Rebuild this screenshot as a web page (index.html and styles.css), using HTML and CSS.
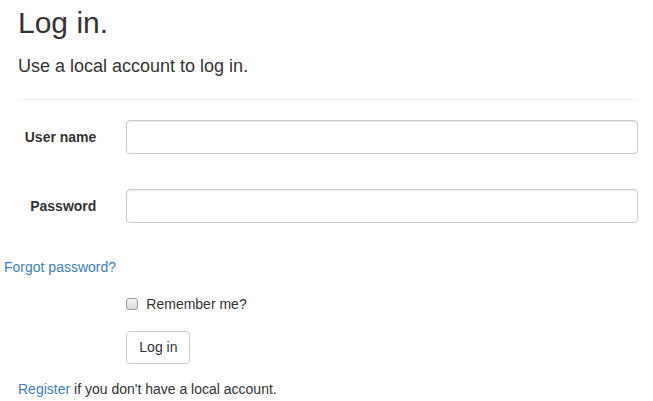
FILE: index.html
```html
<!DOCTYPE html>
<html lang="en">
<head>
<meta charset="utf-8">
<title>Log in</title>
<link rel="stylesheet" href="styles.css">
</head>
<body>
<div class="page">
  <h2 class="title">Log in.</h2>
  <h4 class="subtitle">Use a local account to log in.</h4>
  <hr class="divider">
  <form class="form-horizontal">
    <div class="form-row field-row">
      <label class="label-col" for="username">User name</label>
      <div class="input-col"><input class="form-control" id="username" type="text"></div>
    </div>
    <div class="form-row field-row last">
      <label class="label-col" for="password">Password</label>
      <div class="input-col"><input class="form-control" id="password" type="password"></div>
    </div>
    <p class="forgot"><a href="#">Forgot password?</a></p>
    <div class="form-row check-row">
      <div class="offset-col">
        <label class="checkbox"><input type="checkbox" class="check"><span>Remember me?</span></label>
      </div>
    </div>
    <div class="form-row button-row">
      <div class="offset-col">
        <button type="button" class="btn">Log in</button>
      </div>
    </div>
  </form>
  <p class="register"><a href="#">Register</a> if you don't have a local account.</p>
</div>
</body>
</html>
```
FILE: styles.css
```css
* { box-sizing: border-box; }
html, body { margin: 0; padding: 0; background: #fff; }
body {
  font-family: "Liberation Sans", Arial, Helvetica, sans-serif;
  font-size: 14px;
  line-height: 20px;
  color: #333;
}
a { color: #3f7fbf; text-decoration: none; }

.page { padding: 0 15px 0 18px; }

.title {
  font-size: 30px;
  line-height: 33px;
  font-weight: 500;
  margin: 6px 0 0;
}
.subtitle {
  font-size: 18px;
  line-height: 19.8px;
  font-weight: 500;
  margin: 18px 0 0;
}
.divider {
  border: 0;
  border-top: 1px solid #eee;
  margin: 22px 0 0;
  height: 0;
}

.form-horizontal { margin: 20px 0 0; }
.form-row { display: flex; margin: 0 -15px; }
.field-row { margin-bottom: 35px; }
.field-row.last { margin-bottom: 0; }
.label-col {
  width: 16.6667%;
  padding: 7px 15px 0;
  text-align: right;
  font-weight: bold;
}
.input-col { flex: 1; padding: 0 15px; }
.form-control {
  display: block;
  width: 100%;
  height: 34px;
  padding: 6px 12px;
  font: inherit;
  color: #555;
  background: #fff;
  border: 1px solid #ccc;
  border-radius: 4px;
  box-shadow: inset 0 1px 1px rgba(0,0,0,0.075);
}

.forgot { margin: 0 0 0 -14px; padding-top: 34px; }

.offset-col { margin-left: 16.6667%; padding: 0 15px; }
.check-row { margin-top: 17px; }
.checkbox { display: flex; align-items: center; }
.check {
  -webkit-appearance: none;
  appearance: none;
  width: 12px;
  height: 12px;
  margin: 0 8px 0 0;
  border: 1px solid #9a9a9a;
  border-radius: 3px;
  background: linear-gradient(#f4f4f4, #dcdcdc);
}
.button-row { margin-top: 17px; }
.btn {
  display: inline-block;
  height: 33px;
  padding: 5px 12px;
  font: inherit;
  color: #333;
  background: #fff;
  border: 1px solid #ccc;
  border-radius: 4px;
}
.register { margin: 15px 0 0; }
```
